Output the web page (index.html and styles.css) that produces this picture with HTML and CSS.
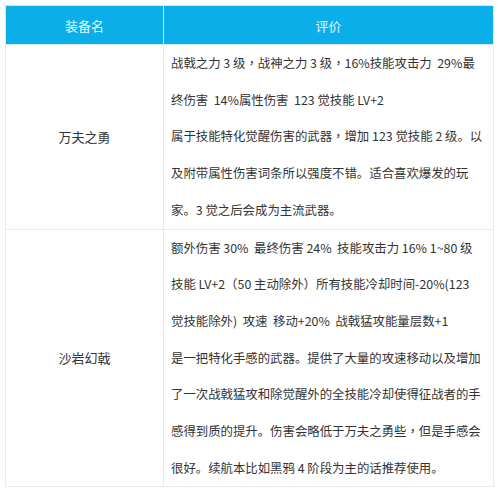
FILE: index.html
```html
<!DOCTYPE html>
<html lang="zh-CN">
<head>
<meta charset="utf-8">
<link rel="stylesheet" href="styles.css">
</head>
<body>
<div class="wrap">
<table class="tbl">
  <thead>
    <tr><th class="c1">装备名</th><th class="c2">评价</th></tr>
  </thead>
  <tbody>
    <tr>
      <td class="name">万夫之勇</td>
      <td class="desc">战戟之力 3 级<span class="cm" lang="zh-TW">，</span>战神之力 3 级<span class="cm" lang="zh-TW">，</span>16%技能攻击力&nbsp; 29%最<br>终伤害&nbsp; 14%属性伤害&nbsp; 123 觉技能 LV+2<br>属于技能特化觉醒伤害的武器<span class="cm" lang="zh-TW">，</span>增加 123 觉技能 2 级。以<br>及附带属性伤害词条所以强度不错。适合喜欢爆发的玩<br>家。3 觉之后会成为主流武器。</td>
    </tr>
    <tr>
      <td class="name">沙岩幻戟</td>
      <td class="desc">额外伤害 30%&nbsp; 最终伤害 24%&nbsp; 技能攻击力 16% 1~80 级<br>技能 LV+2<span class="cm" lang="zh-TW">（</span>50 主动除外<span class="cm" lang="zh-TW">）</span>所有技能冷却时间-20%(123<br>觉技能除外)&nbsp; 攻速&nbsp; 移动+20%&nbsp; 战戟猛攻能量层数+1<br>是一把特化手感的武器。提供了大量的攻速移动以及增加<br>了一次战戟猛攻和除觉醒外的全技能冷却使得征战者的手<br>感得到质的提升。伤害会略低于万夫之勇些<span class="cm" lang="zh-TW">，</span>但是手感会<br>很好。续航本比如黑鸦 4 阶段为主的话推荐使用。</td>
    </tr>
  </tbody>
</table>
</div>
</body>
</html>
```
FILE: styles.css
```css
html, body {
  margin: 0;
  padding: 0;
  background: #ffffff;
}
.wrap {
  padding: 5px 6px 0 5px;
}
.tbl {
  width: 489px;
  border-collapse: collapse;
  border: 1px solid #dbe7f0;
  font-family: "Noto Sans CJK SC", "Noto Sans", sans-serif;
  font-size: 12.4px;
  color: #333333;
}
.tbl th {
  background: #0aafea;
  color: #e6f6fd;
  font-weight: normal;
  font-size: 13px;
  height: 38px;
  padding: 0;
  text-align: center;
  border: 1px solid #dbe7f0;
  border-top: none;
}
.tbl th.c1 {
  width: 157px;
  border-left: none;
}
.tbl th.c2 {
  border-right: none;
}
.tbl td {
  border: 1px solid #e3ecf3;
  padding: 0;
}
.tbl td.name {
  text-align: center;
  vertical-align: middle;
  font-size: 13px;
}
.tbl td.desc {
  line-height: 36.7px;
  padding: 0 6px 0 7px;
  white-space: nowrap;
}
.cm {
  font-family: "Noto Sans CJK TC", sans-serif;
}
```
